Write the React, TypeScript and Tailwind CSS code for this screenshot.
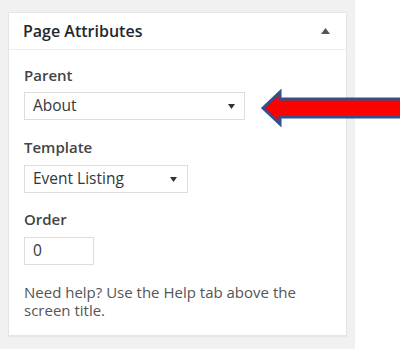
import React from "react";

function Caret() {
  return (
    <svg width="7" height="5" viewBox="0 0 7 5" className="shrink-0">
      <path d="M0 0 L7 0 L3.5 5 Z" fill="#333" />
    </svg>
  );
}

export default function App() {
  const font = { fontFamily: '"Open Sans", "Noto Sans", Arial, sans-serif' };
  return (
    <div className="relative w-[400px] h-[349px] flex bg-white overflow-hidden" style={font}>
      <div className="w-[355px] h-full bg-[#f1f1f1] pt-[12px] pl-[8px]">
        <div className="w-[339px] bg-white border border-[#e5e5e5] shadow-[0_1px_1px_rgba(0,0,0,0.04)]">
          <div className="h-[37px] flex items-center justify-between pl-[14px] pr-[16px] border-b border-[#eeeeee]">
            <span className="text-[16px] font-semibold text-[#23282d]">Page Attributes</span>
            <svg width="9" height="6" viewBox="0 0 9 6">
              <path d="M0 6 L9 6 L4.5 0 Z" fill="#555" />
            </svg>
          </div>
          <div className="pl-[15px] pt-[15px] pb-[16px] text-[#444]">
            <div className="h-[20px] leading-[20px] text-[15px] font-semibold text-[#444]">Parent</div>
            <div className="mt-[7px] w-[221px] h-[28px] border border-[#dddddd] flex items-center justify-between pl-[8px] pr-[9px] text-[15.5px] text-[#32373c]">
              <span>About</span>
              <Caret />
            </div>
            <div className="mt-[17px] h-[20px] leading-[20px] text-[15px] font-semibold text-[#444]">Template</div>
            <div className="mt-[8px] w-[164px] h-[28px] border border-[#dddddd] flex items-center justify-between pl-[8px] pr-[10px] text-[15.5px] text-[#32373c]">
              <span>Event Listing</span>
              <Caret />
            </div>
            <div className="mt-[16px] h-[20px] leading-[20px] text-[15px] font-semibold text-[#444]">Order</div>
            <div className="mt-[8px] w-[70px] h-[28px] border border-[#dddddd] flex items-center pl-[8px] text-[15.5px] text-[#32373c]">
              0
            </div>
            <p className="mt-[18px] w-[290px] text-[15px] leading-[18px] text-[#555]">
              Need help? Use the Help tab above the screen title.
            </p>
          </div>
        </div>
      </div>
      <svg
        className="absolute left-[260px] top-[89px]"
        width="142"
        height="39"
        viewBox="0 0 142 39"
      >
        <path
          d="M3 19 L20 3 L20 10 L141 10 L141 28 L20 28 L20 35 Z"
          fill="#ff0000"
          stroke="#2f528f"
          strokeWidth="3"
          strokeLinejoin="miter"
        />
      </svg>
    </div>
  );
}
